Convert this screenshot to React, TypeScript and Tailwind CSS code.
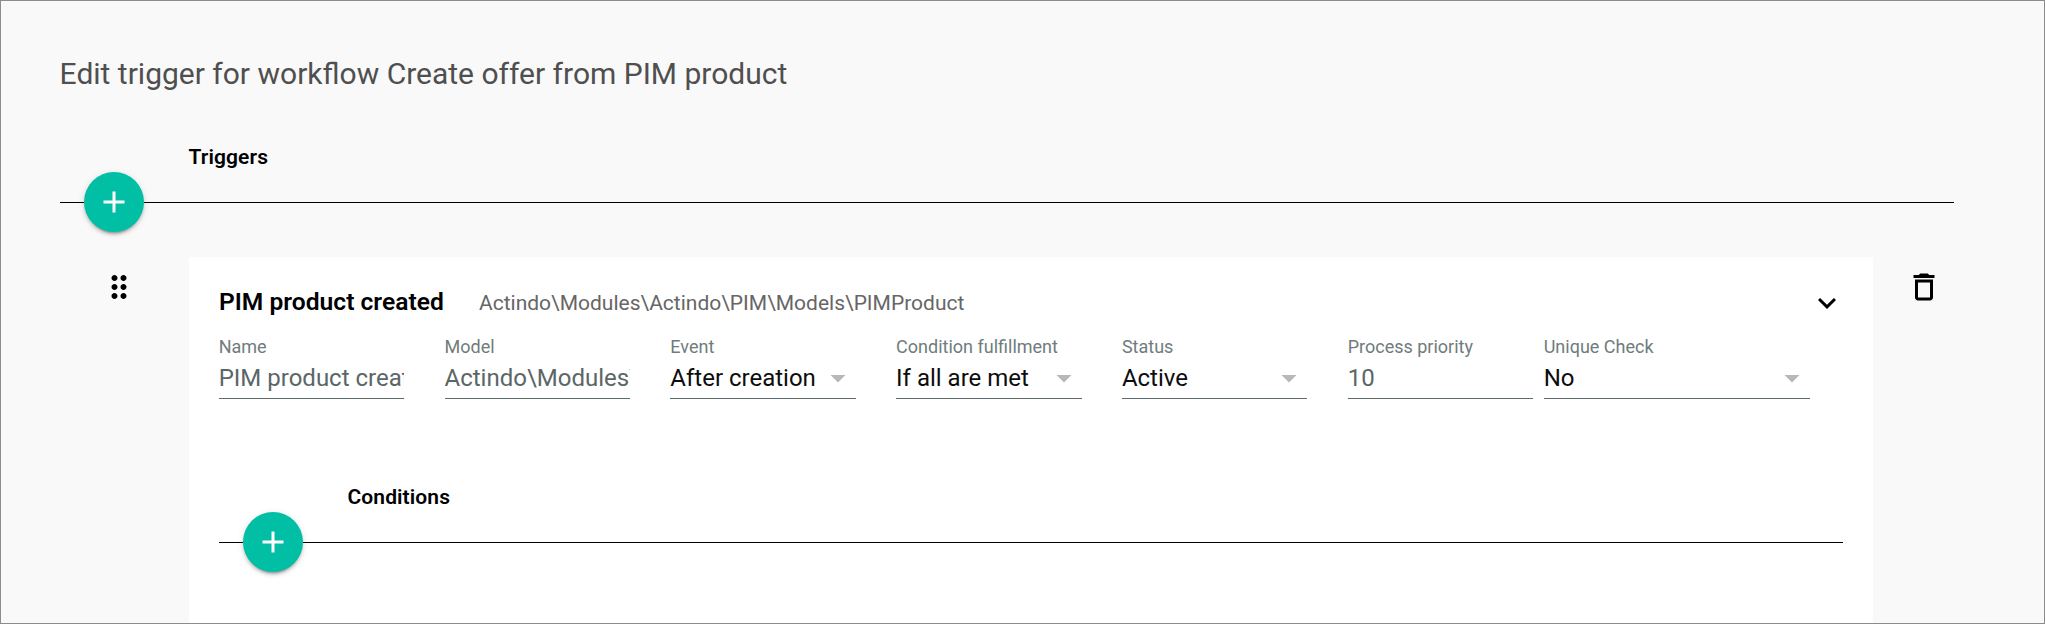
import React from "react";

function Icon({ d, className }: { d: string; className: string }) {
  return (
    <svg viewBox="0 0 24 24" fill="currentColor" className={`h-9 w-9 shrink-0 ${className}`}>
      <path d={d} />
    </svg>
  );
}

const ADD = "M19 13h-6v6h-2v-6H5v-2h6V5h2v6h6v2z";
const EXPAND = "M7.41 8.59L12 13.17l4.59-4.58L18 10l-6 6-6-6 1.41-1.41z";
const ARROW = "M7 10l5 5 5-5z";
const TRASH =
  "M6 19c0 1.1.9 2 2 2h8c1.1 0 2-.9 2-2V7H6v12zM8 9h8v10H8V9zm7.5-5l-1-1h-5l-1 1H5v2h14V4h-3.5z";
const DRAG =
  "M11 18c0 1.1-.9 2-2 2s-2-.9-2-2 .9-2 2-2 2 .9 2 2zm-2-8c-1.1 0-2 .9-2 2s.9 2 2 2 2-.9 2-2-.9-2-2-2zm0-6c-1.1 0-2 .9-2 2s.9 2 2 2 2-.9 2-2-.9-2-2-2zm6 4c1.1 0 2-.9 2-2s-.9-2-2-2-2 .9-2 2 .9 2 2 2zm0 2c-1.1 0-2 .9-2 2s.9 2 2 2 2-.9 2-2-.9-2-2-2zm0 6c-1.1 0-2 .9-2 2s.9 2 2 2 2-.9 2-2-.9-2-2-2z";

function SectionHeader({ label }: { label: string }) {
  return (
    <div>
      <h2 className="ml-[128.5px] text-[21px] leading-6 font-semibold tracking-[0.1px] text-black">
        {label}
      </h2>
      <div className="mt-[3px] flex h-[61px] items-center">
        <div className="h-px w-6 bg-black" />
        <button
          aria-label="Add"
          className="flex h-[60px] w-[60px] items-center justify-center self-start rounded-full bg-[#00bfa5] shadow-[0_4.5px_1.5px_-3px_rgba(0,0,0,0.2),0_3px_3px_rgba(0,0,0,0.14),0_1.5px_7.5px_rgba(0,0,0,0.12)]"
        >
          <Icon d={ADD} className="text-white" />
        </button>
        <div className="h-px flex-1 bg-black" />
      </div>
    </div>
  );
}

function Field({
  label,
  value,
  select = false,
  className = "w-[185.5px]",
}: {
  label: string;
  value: string;
  select?: boolean;
  className?: string;
}) {
  return (
    <div className={`shrink-0 ${className}`}>
      <div className="text-[18px] leading-5 whitespace-nowrap text-[#707c7c]">{label}</div>
      <div className="mt-[3px] flex h-[39px] items-center border-b border-[#5d6c6b]">
        <span
          className={`mb-[2px] min-w-0 flex-1 overflow-hidden text-2xl leading-8 whitespace-nowrap ${
            select ? "text-[#0d0d0d]" : "text-[#5b6667]"
          }`}
        >
          {value}
        </span>
        {select && <Icon d={ARROW} className="mb-[2px] -ml-1 text-[#b8b8b8]" />}
      </div>
    </div>
  );
}

export default function App() {
  return (
    <div className="h-[624px] overflow-hidden border border-[#8c8c8c] bg-[#f9f9f9] pt-[55px] pr-[90px] pl-[59px] font-['Roboto',sans-serif]">
      <h1 className="-ml-[0.4px] text-[30px] leading-9 text-[#4f4f4f]">
        Edit trigger for workflow Create offer from PIM product
      </h1>

      <div className="mt-[53px]">
        <SectionHeader label="Triggers" />
      </div>

      <div className="mt-6 flex items-start">
        <div className="w-[129px] shrink-0 pt-3 pl-[41px]">
          <Icon d={DRAG} className="text-black" />
        </div>

        <div className="h-[366px] min-w-0 flex-1 bg-white px-[30px] pt-7">
          <div className="flex h-9 items-center">
            <span className="mb-[2px] w-[260px] text-[24.6px] leading-8 font-semibold text-black">
              PIM product created
            </span>
            <span className="flex-1 text-[21px] leading-8 text-[#666666]">
              Actindo\Modules\Actindo\PIM\Models\PIMProduct
            </span>
            <Icon d={EXPAND} className="-mr-[2px] text-black" />
          </div>

          <div className="mt-4 -ml-[0.3px] flex">
            <div className="flex gap-[40.3px]">
              <Field label="Name" value="PIM product created" />
              <Field label="Model" value="Actindo\Modules\" />
              <Field label="Event" value="After creation" select />
              <Field label="Condition fulfillment" value="If all are met" select />
              <Field label="Status" value="Active" select />
              <Field label="Process priority" value="10" />
            </div>
            <Field label="Unique Check" value="No" select className="ml-[10.5px] w-[266px]" />
          </div>

          <div className="mt-[86px]">
            <SectionHeader label="Conditions" />
          </div>
        </div>

        <div className="w-[81px] shrink-0 pt-3 pl-[33px]">
          <Icon d={TRASH} className="text-black" />
        </div>
      </div>
    </div>
  );
}
